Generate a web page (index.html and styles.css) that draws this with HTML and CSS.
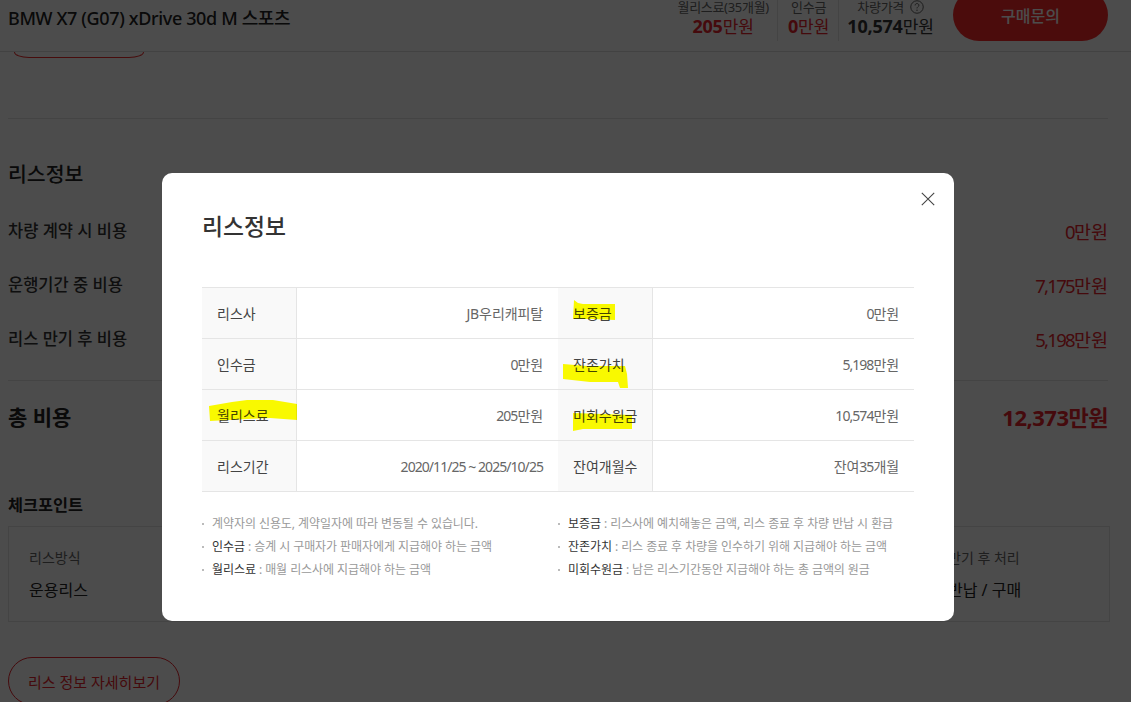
FILE: index.html
```html
<!DOCTYPE html>
<html lang="ko">
<head>
<meta charset="utf-8">
<title>리스정보</title>
<link rel="stylesheet" href="styles.css">
</head>
<body>
<div class="page">
  <header class="topbar">
    <h1 class="car-name">BMW X7 (G07) xDrive 30d M 스포츠</h1>
    <div class="summary">
      <div class="sum-item sum-monthly"><span class="sum-label">월리스료(35개월)</span><span class="sum-value red"><b>205</b>만원</span></div>
      <div class="sum-item sum-deposit"><span class="sum-label">인수금</span><span class="sum-value red"><b>0</b>만원</span></div>
      <div class="sum-item sum-price">
        <span class="sum-label">차량가격
          <svg class="help" viewBox="0 0 15 15" aria-hidden="true"><circle cx="7.5" cy="7.5" r="6.7" fill="none" stroke="#555" stroke-width="1"/><path d="M5.5 5.8c0-1.3 1-2 2-2s2 .7 2 1.9c0 1.5-2 1.6-2 3.3" fill="none" stroke="#555" stroke-width="1"/><circle cx="7.5" cy="11" r=".7" fill="#555"/></svg>
        </span>
        <span class="sum-value"><b>10,574</b>만원</span>
      </div>
    </div>
    <button class="buy-btn">구매문의</button>
  </header>
  <div class="cut-btn-wrap"><span class="cut-btn"></span></div>
  <main class="content">
    <h2 class="section-title">리스정보</h2>
    <div class="cost-row"><span>차량 계약 시 비용</span><span class="cost-value"><span class="n">0</span>만원</span></div>
    <div class="cost-row"><span>운행기간 중 비용</span><span class="cost-value"><span class="n">7,175</span>만원</span></div>
    <div class="cost-row"><span>리스 만기 후 비용</span><span class="cost-value"><span class="n">5,198</span>만원</span></div>
    <div class="total-row"><span class="total-label">총 비용</span><span class="total-value">12,373만원</span></div>
    <h3 class="check-title">체크포인트</h3>
    <div class="check-box">
      <div class="check-item"><span class="check-label">리스방식</span><span class="check-value">운용리스</span></div>
      <div class="check-item"><span class="check-label">만기 후 처리</span><span class="check-value">반납 / 구매</span></div>
    </div>
    <a class="detail-btn">리스 정보 자세히보기</a>
  </main>
</div>

<div class="overlay"></div>

<section class="modal">
  <svg class="close" viewBox="0 0 14 14" aria-hidden="true"><path d="M.8.8l12.4 12.4M13.2.8L.8 13.2" fill="none" stroke="#444" stroke-width="1.1"/></svg>
  <h2 class="modal-title">리스정보</h2>
  <table class="lease">
    <colgroup><col class="c-th"><col class="c-td"><col class="c-th"><col class="c-td"></colgroup>
    <tr><th>리스사</th><td>JB우리캐피탈</td><th>보증금</th><td><span class="n">0</span>만원</td></tr>
    <tr><th>인수금</th><td><span class="n">0</span>만원</td><th>잔존가치</th><td><span class="n">5,198</span>만원</td></tr>
    <tr><th>월리스료</th><td><span class="n">205</span>만원</td><th>미회수원금</th><td><span class="n">10,574</span>만원</td></tr>
    <tr><th>리스기간</th><td><span class="n">2020/11/25 ~ 2025/10/25</span></td><th>잔여개월수</th><td>잔여<span class="n">35</span>개월</td></tr>
  </table>
  <div class="notes">
    <ul class="note-col">
      <li>계약자의 신용도, 계약일자에 따라 변동될 수 있습니다.</li>
      <li><b>인수금</b> : 승계 시 구매자가 판매자에게 지급해야 하는 금액</li>
      <li><b>월리스료</b> : 매월 리스사에 지급해야 하는 금액</li>
    </ul>
    <ul class="note-col">
      <li><b>보증금</b> : 리스사에 예치해놓은 금액, 리스 종료 후 차량 반납 시 환급</li>
      <li><b>잔존가치</b> : 리스 종료 후 차량을 인수하기 위해 지급해야 하는 금액</li>
      <li><b>미회수원금</b> : 남은 리스기간동안 지급해야 하는 총 금액의 원금</li>
    </ul>
  </div>
  <svg class="marks" viewBox="0 0 792 448" aria-hidden="true">
    <polygon points="47,233 70,229 85,227 111,227 135,231 135,247 108,245 85,246 48,248"/>
    <polygon points="412,127 416,130 421,131 453,131 453,147 430,146 411,146"/>
    <polygon points="401,191 425,193 463,193 465,201 466,215 458,215 456,209 428,209 401,206"/>
    <polygon points="411,240 440,241 470,242 470,256 421,256 411,258"/>
  </svg>
</section>
</body>
</html>
```

FILE: styles.css
```css
* { box-sizing: border-box; }
html, body { margin: 0; height: 702px; overflow: hidden; }
body {
  font-family: "Noto Sans", "Noto Sans CJK KR", sans-serif;
  color: #222;
  background: #fff;
}
.page { width: 1131px; height: 702px; overflow: hidden; }

/* sticky bar, scrolled so its contents touch the top */
.topbar {
  height: 52px;
  border-bottom: 1px solid #ddd;
  padding: 0 23px 10px 8px;
  display: flex;
  align-items: flex-end;
  overflow: hidden;
}
.car-name {
  margin: 0 auto 10px 0;
  font-size: 18px;
  line-height: 26px;
  font-weight: 500;
  letter-spacing: -.36px;
  color: #222;
}
.summary { display: flex; align-items: flex-end; margin-right: 19px; }
.sum-item {
  display: flex;
  flex-direction: column;
  align-items: center;
  height: 41px;
  justify-content: flex-end;
}
.sum-monthly { padding-right: 8px; border-right: 1px solid #e4e4e4; }
.sum-deposit { padding: 0 9px 0 10px; border-right: 1px solid #e4e4e4; }
.sum-price { padding-left: 8px; }
.sum-label {
  font-size: 13px;
  line-height: 14px;
  color: #666;
  letter-spacing: -.3px;
  display: flex;
  align-items: center;
  gap: 6px;
}
.sum-value {
  font-size: 17px;
  line-height: 24px;
  margin-bottom: 2px;
  color: #333;
}
.sum-value b { font-weight: 700; font-size: 18px; letter-spacing: -.2px; }
.sum-value.red { color: #e8242c; }
.help { width: 14px; height: 14px; }
.buy-btn {
  width: 155px;
  height: 52px;
  flex: none;
  border: 0;
  border-radius: 26px;
  background: #fc2a2a;
  color: #fff;
  font: 500 16px "Noto Sans", "Noto Sans CJK KR", sans-serif;
  padding: 2px 0 0;
  display: flex;
  align-items: flex-start;
  justify-content: center;
  line-height: 50px;
}

/* the button just below the bar, mostly scrolled away */
.cut-btn-wrap {
  height: 66px;
  padding: 0 0 0 14px;
  display: flex;
  flex-direction: column;
}
.cut-btn {
  display: block;
  width: 130px;
  height: 6px;
  flex: none;
  border: 1px solid #ee2a2a;
  border-top: 0;
  border-radius: 0 0 15px 15px / 0 0 6px 6px;
}

.content { margin: 0 23px 0 8px; border-top: 1px solid #e4e4e4; padding-top: 41px; }
.section-title {
  margin: 0 0 30px;
  font-size: 20.5px;
  line-height: 28px;
  font-weight: 500;
  color: #222;
}
.cost-row {
  display: flex;
  justify-content: space-between;
  height: 54px;
  font-size: 16.5px;
  line-height: 26px;
  font-weight: 500;
  color: #333;
}
.cost-value { font-size: 18.5px; font-weight: 400; color: #e8242c; line-height: 28px; }
.cost-value .n { letter-spacing: -1.7px; }
.total-row {
  display: flex;
  justify-content: space-between;
  align-items: center;
  height: 72px;
  padding-bottom: 2px;
  border-top: 1px solid #e4e4e4;
}
.total-label { font-size: 21px; font-weight: 700; color: #222; }
.total-value { font-size: 22px; font-weight: 700; color: #e8242c; letter-spacing: -.5px; }
.check-title {
  margin: 0;
  padding-top: 41px;
  font-size: 16.3px;
  line-height: 24px;
  height: 74px;
  font-weight: 700;
  color: #222;
}
.check-box {
  width: 1102px;
  height: 96px;
  border: 1px solid #e4e4e4;
  display: flex;
  justify-content: space-between;
  padding: 20px 0 0 20px;
}
.check-item { display: flex; flex-direction: column; width: 90px; }
.check-item:last-child { width: 161px; }
.check-label { font-size: 14px; line-height: 22px; color: #666; margin-bottom: 9px; }
.check-value { font-size: 16px; line-height: 24px; color: #222; }
.detail-btn {
  display: flex;
  align-items: center;
  justify-content: center;
  width: 172px;
  height: 48px;
  margin-top: 35px;
  border: 1px solid #e8242c;
  border-radius: 24px;
  font-size: 15px;
  color: #e8242c;
}

.overlay { position: fixed; inset: 0; background: rgba(0, 0, 0, .7); }

.modal {
  position: absolute;
  left: 162px;
  top: 173px;
  width: 792px;
  height: 448px;
  padding: 40px;
  background: #fff;
  border-radius: 10px;
}
.close { position: absolute; left: 759px; top: 19px; width: 14px; height: 14px; }
.modal-title {
  margin: 0 0 46px;
  font-size: 22.8px;
  line-height: 28px;
  font-weight: 500;
  color: #333;
}
.lease {
  width: 712px;
  table-layout: fixed;
  border-collapse: separate;
  border-spacing: 0;
  border-top: 1px solid #e5e5e5;
  font-size: 14px;
}
.c-th { width: 95px; }
.c-td { width: 261px; }
.lease th, .lease td { height: 51px; border-bottom: 1px solid #e5e5e5; }
.lease th {
  padding: 0 0 0 15px;
  background: #f9f9f9;
  border-right: 1px solid #e5e5e5;
  text-align: left;
  font-weight: 400;
  color: #444;
}
.lease td {
  padding: 0 15px 0 0;
  text-align: right;
  font-weight: 400;
  letter-spacing: -.1px;
  color: #666;
}
.lease .n { letter-spacing: -.95px; }
.notes { display: grid; grid-template-columns: 356px 356px; margin-top: 20px; }
.note-col { list-style: none; margin: 0; padding: 0; }
.note-col li {
  position: relative;
  padding-left: 10px;
  font-size: 12px;
  line-height: 23px;
  letter-spacing: -.07px;
  color: #999;
}
.note-col li::before {
  content: "";
  position: absolute;
  left: 0;
  top: 11px;
  width: 2px;
  height: 2px;
  background: #bbb;
}
.note-col b { font-weight: 400; color: #333; }
.marks {
  position: absolute;
  left: 0;
  top: 0;
  width: 792px;
  height: 448px;
  fill: #ffff00;
  mix-blend-mode: multiply;
  pointer-events: none;
}
```
